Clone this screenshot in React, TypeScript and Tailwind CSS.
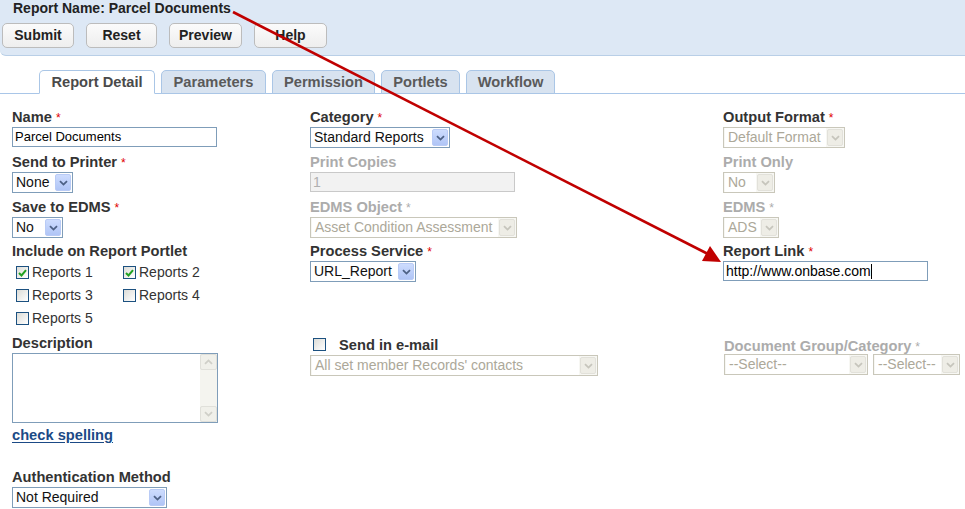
import type { ReactNode } from "react";

function Chevron({ color }: { color: string }) {
  return (
    <svg width="9" height="6" viewBox="0 0 9 6" fill="none">
      <path d="M1 1.2 L4.5 4.6 L8 1.2" stroke={color} strokeWidth="1.8" />
    </svg>
  );
}

function Label({
  children,
  required,
  disabled,
}: {
  children: ReactNode;
  required?: boolean;
  disabled?: boolean;
}) {
  return (
    <div
      className={`h-[15px] leading-[15px] text-[14.67px] font-bold mb-[2px] whitespace-nowrap ${
        disabled ? "text-[#acacac]" : "text-[#333]"
      }`}
    >
      {children}
      {required && (
        <span className={`ml-[4px] font-normal text-[12px] ${disabled ? "text-[#acacac]" : "text-[#e00000]"}`}>
          *
        </span>
      )}
    </div>
  );
}

function Select({
  value,
  width,
  disabled,
}: {
  value: string;
  width: string;
  disabled?: boolean;
}) {
  return (
    <div
      className={`flex items-center h-[21px] border ${width} ${
        disabled ? "border-[#c9c7ba] bg-[#f7f7f3]" : "border-[#7f9db9] bg-white"
      }`}
    >
      <span
        className={`flex-1 pl-[3px] leading-[19px] whitespace-nowrap overflow-hidden ${
          disabled ? "text-[#aca899] bg-white mx-[1px]" : "text-[#111]"
        }`}
      >
        {value}
      </span>
      <span
        className={`flex items-center justify-center shrink-0 w-[16px] h-[17px] mr-[1px] rounded-[2px] border ${
          disabled
            ? "bg-[#eeede6] border-[#e2e1da]"
            : "bg-gradient-to-b from-[#cddcfe] to-[#b0c5f6] border-[#b9cbf6]"
        }`}
      >
        <Chevron color={disabled ? "#c6c5bc" : "#4d6185"} />
      </span>
    </div>
  );
}

function Checkbox({ checked }: { checked?: boolean }) {
  return (
    <span className="flex items-center justify-center shrink-0 w-[13px] h-[13px] border border-[#1c5180] bg-gradient-to-br from-[#dcdcd7] to-white">
      {checked && (
        <svg width="9" height="8" viewBox="0 0 9 8" fill="none">
          <path d="M1 4 L3.5 6.5 L8 1.2" stroke="#21a121" strokeWidth="2" />
        </svg>
      )}
    </span>
  );
}

function CheckItem({ label, checked }: { label: string; checked?: boolean }) {
  return (
    <div className="flex items-center gap-[3px] pl-[4px] h-[23px] text-[#333]">
      <Checkbox checked={checked} />
      <span>{label}</span>
    </div>
  );
}

const buttons = [
  { label: "Submit", w: "w-[72px]" },
  { label: "Reset", w: "w-[71px]" },
  { label: "Preview", w: "w-[73px]" },
  { label: "Help", w: "w-[73px]" },
];

const tabs = [
  { label: "Report Detail", w: "w-[116px]", active: true },
  { label: "Parameters", w: "w-[105px]" },
  { label: "Permission", w: "w-[103px]" },
  { label: "Portlets", w: "w-[79px]" },
  { label: "Workflow", w: "w-[89px]" },
];

export default function App() {
  return (
    <div className="relative w-[965px] h-[509px] overflow-hidden bg-white text-[14px] font-['Liberation_Sans',Arial,sans-serif] text-black">
      {/* header */}
      <div className="h-[56px] bg-[#dde8f5] border-b border-[#b9cfe7] rounded-bl-[6px] pt-[1px]">
        <div className="pl-[13px] h-[15px] leading-[15px] font-bold text-[#222]">
          Report Name: Parcel Documents
        </div>
        <div className="flex gap-[12px] pl-[2px] mt-[7px]">
          {buttons.map((b) => (
            <button
              key={b.label}
              className={`${b.w} h-[25px] rounded-[5px] border border-[#bcbcbc] bg-gradient-to-b from-[#fbfbfb] to-[#eeeeee] font-bold text-[#222]`}
            >
              {b.label}
            </button>
          ))}
        </div>
      </div>

      {/* tabs */}
      <div className="flex items-end gap-[6px] pl-[39px] pt-[14px] border-b border-[#a9c6e8]">
        {tabs.map((t) => (
          <div
            key={t.label}
            className={`${t.w} h-[24px] -mb-px flex items-center justify-center rounded-t-[5px] border border-[#aac6e6] text-[14.67px] font-bold ${
              t.active ? "bg-white border-b-white text-[#4a4a4a]" : "bg-[#d8e3f0] text-[#5a5a5a]"
            }`}
          >
            {t.label}
          </div>
        ))}
      </div>

      {/* form */}
      <div className="grid grid-cols-[298px_413px_1fr] gap-y-[7px] pl-[12px] pt-[16px]">
        {/* row 1 */}
        <div>
          <Label required>Name</Label>
          <div className="w-[205px] h-[20px] border border-[#7f9db9] pl-[2px] leading-[18px] text-[13px]">
            Parcel Documents
          </div>
        </div>
        <div>
          <Label required>Category</Label>
          <Select value="Standard Reports" width="w-[140px]" />
        </div>
        <div>
          <Label required>Output Format</Label>
          <Select value="Default Format" width="w-[122px]" disabled />
        </div>

        {/* row 2 */}
        <div>
          <Label required>Send to Printer</Label>
          <Select value="None" width="w-[61px]" />
        </div>
        <div>
          <Label disabled>Print Copies</Label>
          <div className="w-[205px] h-[20px] border border-[#c9c9c9] bg-[#f2f2f2] pl-[2px] leading-[18px] text-[#b0b0b0]">
            1
          </div>
        </div>
        <div>
          <Label disabled>Print Only</Label>
          <Select value="No" width="w-[52px]" disabled />
        </div>

        {/* row 3 */}
        <div>
          <Label required>Save to EDMS</Label>
          <Select value="No" width="w-[51px]" />
        </div>
        <div>
          <Label required disabled>EDMS Object</Label>
          <Select value="Asset Condition Assessment" width="w-[207px]" disabled />
        </div>
        <div>
          <Label required disabled>EDMS</Label>
          <Select value="ADS" width="w-[56px]" disabled />
        </div>

        {/* row 4 */}
        <div className="-mt-px">
          <Label>Include on Report Portlet</Label>
          <div className="grid grid-cols-[107px_107px] grid-rows-[23px_23px_22px]">
            <CheckItem label="Reports 1" checked />
            <CheckItem label="Reports 2" checked />
            <CheckItem label="Reports 3" />
            <CheckItem label="Reports 4" />
            <CheckItem label="Reports 5" />
          </div>
        </div>
        <div className="-mt-px">
          <Label required>Process Service</Label>
          <Select value="URL_Report" width="w-[106px]" />
        </div>
        <div className="-mt-px">
          <Label required>Report Link</Label>
          <div className="flex items-center w-[205px] h-[20px] border border-[#7f9db9] pl-[2px]">
            <span>http://www.onbase.com</span>
            <span className="w-px h-[15px] bg-black" />
          </div>
        </div>

        {/* row 5 */}
        <div>
          <Label>Description</Label>
          <div className="flex w-[206px] h-[70px] border border-[#7f9db9] mt-[2px]">
            <div className="flex-1" />
            <div className="w-[17px] flex flex-col justify-between bg-[#f4f4ef]">
              <span className="flex items-center justify-center h-[16px] border border-[#e0e0da] bg-[#f0f0ea] rounded-[2px]">
                <svg width="9" height="6" viewBox="0 0 9 6" fill="none">
                  <path d="M1 4.8 L4.5 1.4 L8 4.8" stroke="#cfcfc8" strokeWidth="1.8" />
                </svg>
              </span>
              <span className="flex items-center justify-center h-[16px] border border-[#e0e0da] bg-[#f0f0ea] rounded-[2px]">
                <Chevron color="#cfcfc8" />
              </span>
            </div>
          </div>
          <div className="mt-[5px] h-[16px] leading-[15px] text-[14.67px] font-bold text-[#1b4a86] underline underline-offset-2">
            check spelling
          </div>
          <div className="mt-[26px]">
            <Label>Authentication Method</Label>
            <Select value="Not Required" width="w-[155px]" />
          </div>
        </div>
        <div>
          <div className="flex items-center h-[17px] pl-[3px] mb-[2px]">
            <Checkbox />
            <span className="ml-[13px] text-[14.67px] font-bold text-[#333]">Send in e-mail</span>
          </div>
          <Select value="All set member Records' contacts" width="w-[288px]" disabled />
        </div>
        <div className="pt-[3px]">
          <div className="pl-[1px]">
            <Label required disabled>Document Group/Category</Label>
          </div>
          <div className="flex gap-[5px] pl-[1px] -mt-[2px]">
            <Select value="--Select--" width="w-[144px]" disabled />
            <Select value="--Select--" width="w-[87px]" disabled />
          </div>
        </div>
      </div>

      {/* annotation arrow */}
      <svg className="absolute left-0 top-0 pointer-events-none" width="965" height="509" viewBox="0 0 965 509">
        <line x1="233" y1="12" x2="708" y2="254" stroke="#c00000" strokeWidth="2.6" />
        <polygon points="721,262 702,261 710,246" fill="#c00000" />
      </svg>
    </div>
  );
}
